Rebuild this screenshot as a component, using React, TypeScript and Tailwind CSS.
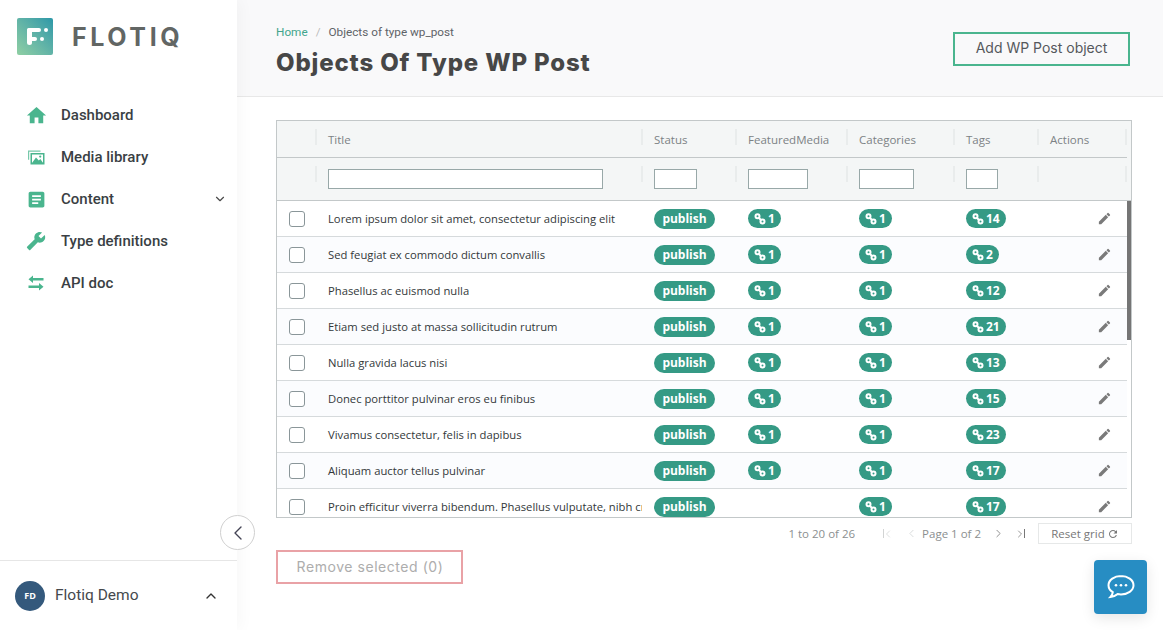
import { MdArticle, MdBuild, MdEdit, MdHome, MdRefresh } from 'react-icons/md';
import { ChevronDown, ChevronLeft, ChevronRight, ChevronUp } from 'lucide-react';

const rows = [
  { title: 'Lorem ipsum dolor sit amet, consectetur adipiscing elit', media: true, tags: 14 },
  { title: 'Sed feugiat ex commodo dictum convallis', media: true, tags: 2 },
  { title: 'Phasellus ac euismod nulla', media: true, tags: 12 },
  { title: 'Etiam sed justo at massa sollicitudin rutrum', media: true, tags: 21 },
  { title: 'Nulla gravida lacus nisi', media: true, tags: 13 },
  { title: 'Donec porttitor pulvinar eros eu finibus', media: true, tags: 15 },
  { title: 'Vivamus consectetur, felis in dapibus', media: true, tags: 23 },
  { title: 'Aliquam auctor tellus pulvinar', media: true, tags: 17 },
  { title: 'Proin efficitur viverra bibendum. Phasellus vulputate, nibh cras', media: false, tags: 17 },
];

const columns = [
  { name: 'Title', input: 'w-[275px]' },
  { name: 'Status', input: 'w-[43px]' },
  { name: 'FeaturedMedia', input: 'w-[60px]' },
  { name: 'Categories', input: 'w-[55px]' },
  { name: 'Tags', input: 'w-[32px]' },
  { name: 'Actions', input: '' },
];

const gridCols = 'grid grid-cols-[39px_326px_94px_111px_107px_84px_89px]';

function LinkPill({ count }: { count: number }) {
  return (
    <span className="inline-flex h-[19px] items-center gap-[2px] rounded-full bg-[#359a85] px-[6px] font-['Open_Sans',sans-serif] text-[12px] font-bold text-white">
      <svg width="12" height="12" viewBox="0 0 12 12" fill="none" stroke="white" strokeWidth="2">
        <circle cx="3.5" cy="3.300" r="2" />
        <circle cx="8.500" cy="8.500" r="2" />
        <path d="M4.800 4.800 7.200 7.200" />
      </svg>
      {count}
    </span>
  );
}

function MediaIcon() {
  return (
    <svg width="18" height="16" viewBox="0 0 18 16" className="text-[#4ab58e]">
      <path d="M1 1.500h12.500v1.200H2.200v8H1z" fill="currentColor" opacity="0.75" />
      <path d="M3.500 4H17.500v11.500H3.500zM5 5.400v8.700h11V5.400z" fill="currentColor" />
      <path d="M4.600 14.600 9 8.600l2.800 3 1.500-1.500 3.200 4.500z" fill="currentColor" />
      <circle cx="13.200" cy="7.600" r="1.100" fill="currentColor" />
    </svg>
  );
}

function SwapIcon() {
  return (
    <svg width="16" height="16" viewBox="0 0 16 16" fill="currentColor" className="text-[#4ab58e]">
      <path d="M5 .5v2.400h10.500v2.600H5v2.400L.5 4.200z" />
      <path d="M11 8v2.400H.5V13H11v2.400l4.500-3.700z" />
    </svg>
  );
}

function SideItem({ icon, label, chevron }: { icon: React.ReactNode; label: string; chevron?: boolean }) {
  return (
    <div className="flex h-[42px] items-center pl-[27px] pr-[10px]">
      <span className="flex w-[18px] items-center justify-center">{icon}</span>
      <span className="ml-[16px] flex-1 font-['Roboto',sans-serif] text-[15px] font-medium text-[#3a3f44]">{label}</span>
      {chevron && <ChevronDown size={14} className="text-[#4a4a4a]" />}
    </div>
  );
}

function Sidebar() {
  return (
    <aside className="relative z-10 flex h-full w-[237px] shrink-0 flex-col bg-white shadow-[4px_0_14px_rgba(0,0,0,0.03)]">
      <div className="flex items-center pl-[17px] pt-[18px]">
        <div className="relative h-[37px] w-[36px] rounded-[2px] bg-gradient-to-tr from-[#8fcfa3] to-[#2b98a8]">
          <span className="absolute left-[10px] top-[10px] h-[17px] w-[5px] rounded-full bg-white" />
          <span className="absolute left-[10px] top-[10px] h-[4px] w-[14px] rounded-full bg-white" />
          <span className="absolute left-[10px] top-[19px] h-[4px] w-[10px] rounded-full bg-white" />
          <span className="absolute left-[27px] top-[10px] h-[4px] w-[4px] rounded-full bg-white" />
          <span className="absolute left-[23px] top-[19px] h-[4px] w-[4px] rounded-full bg-white" />
        </div>
        <span className="ml-[19px] pt-[2px] font-['Inter',sans-serif] text-[25px] leading-none font-bold tracking-[3.6px] text-[#626664]">FLOTIQ</span>
      </div>
      <nav className="mt-[39px]">
        <SideItem icon={<MdHome size={23} className="shrink-0 text-[#4ab58e]" />} label="Dashboard" />
        <SideItem icon={<MediaIcon />} label="Media library" />
        <SideItem icon={<MdArticle size={21} className="shrink-0 text-[#4ab58e]" />} label="Content" chevron />
        <SideItem icon={<MdBuild size={20} className="shrink-0 -scale-x-100 text-[#4ab58e]" />} label="Type definitions" />
        <SideItem icon={<SwapIcon />} label="API doc" />
      </nav>
      <div className="mt-auto flex h-[70px] items-center border-t border-[#e6e6e6] pl-[15px] pr-[18px]">
        <span className="flex h-[30px] w-[30px] items-center justify-center rounded-full bg-[#34597c] font-['Open_Sans',sans-serif] text-[9px] font-bold text-white">FD</span>
        <span className="ml-[10px] flex-1 font-['Roboto',sans-serif] text-[15.5px] text-[#45494d]">Flotiq Demo</span>
        <ChevronUp size={16} className="text-[#333]" />
      </div>
      <button className="absolute right-[-18px] top-[515px] flex h-[35px] w-[35px] items-center justify-center rounded-full border border-[#d0d0d0] bg-white">
        <ChevronLeft size={24} strokeWidth={1.4} className="text-[#445]" />
      </button>
    </aside>
  );
}

function Table() {
  return (
    <div className="h-[398px] overflow-hidden border border-[#c3c8c9] font-['Open_Sans',sans-serif]">
      <div className="bg-[#f4f6f6]">
        <div className={`${gridCols} h-[37px] w-[850px] border-b border-[#c3c8c9] text-[11.5px] text-[#7c8285]`}>
          <div />
          {columns.map((col) => (
            <div key={col.name} className="relative flex items-center pl-[12px] pt-[1px]">
              <span className="absolute -left-px top-[8px] h-[16px] w-[2px] bg-[#e9ecec]" />
              {col.name}
              {col.name === 'Actions' && <span className="absolute right-0 top-[8px] h-[16px] w-[2px] bg-[#e9ecec]" />}
            </div>
          ))}
        </div>
        <div className="border-b border-[#c3c8c9]">
          <div className={`${gridCols} h-[42px] w-[850px]`}>
            <div />
            {columns.map((col) => (
              <div key={col.name} className="relative flex items-center pl-[12px]">
                <span className="absolute -left-px top-[8px] h-[16px] w-[2px] bg-[#e9ecec]" />
                {col.input && <span className={`${col.input} h-[20px] border border-[#98a8a8] bg-white`} />}
                {col.name === 'Actions' && <span className="absolute right-0 top-[8px] h-[16px] w-[2px] bg-[#e9ecec]" />}
              </div>
            ))}
          </div>
        </div>
      </div>
      <div className="relative">
        <div className="absolute left-[850px] top-0 h-[139px] w-[4px] bg-[#757575]" />
        {rows.map((row, i) => (
          <div key={row.title} className={`${gridCols} h-[36px] w-[850px] border-b border-[#d6dadc] ${i % 2 === 1 ? 'bg-[#fbfcfe]' : 'bg-white'}`}>
            <div className="flex items-center pl-[12px]">
              <span className="h-[16px] w-[16px] rounded-[3px] border border-[#8a9699] bg-white" />
            </div>
            <div className="flex items-center overflow-hidden pl-[12px] pt-[1px]">
              <span className="whitespace-nowrap text-[11.25px] text-[#33383a]">{row.title}</span>
            </div>
            <div className="flex items-center pl-[12px]">
              <span className="flex h-[20px] w-[61px] items-center justify-center rounded-full bg-[#359a85] text-[12px] font-bold text-white">publish</span>
            </div>
            <div className="flex items-center pl-[12px]">{row.media && <LinkPill count={1} />}</div>
            <div className="flex items-center pl-[12px]">
              <LinkPill count={1} />
            </div>
            <div className="flex items-center pl-[12px]">
              <LinkPill count={row.tags} />
            </div>
            <div className="flex items-center justify-end pr-[15px]">
              <MdEdit size={15} className="text-[#7a7a7a]" />
            </div>
          </div>
        ))}
      </div>
    </div>
  );
}

function Pager() {
  return (
    <div className="mt-[5px] flex h-[21px] items-center justify-end font-['Open_Sans',sans-serif] text-[11.5px] text-[#8b8f90]">
      <span>1 to 20 of 26</span>
      <span className="ml-[28px] flex items-center text-[#d2d4d4]">
        <span className="h-[9px] w-px bg-[#d2d4d4]" />
        <ChevronLeft size={12} strokeWidth={1.5} className="-ml-[2px]" />
      </span>
      <ChevronLeft size={13} strokeWidth={1.5} className="ml-[11px] text-[#d2d4d4]" />
      <span className="ml-[4px]">Page 1 of 2</span>
      <ChevronRight size={13} strokeWidth={1.5} className="ml-[11px] text-[#777]" />
      <span className="ml-[9px] flex items-center text-[#777]">
        <ChevronRight size={12} strokeWidth={1.5} className="-mr-[2px]" />
        <span className="h-[9px] w-px bg-[#777]" />
      </span>
      <span className="ml-[13px] flex h-[21px] w-[94px] items-center justify-center gap-[2px] border border-[#e6e8e8] text-[#777]">
        Reset grid
        <MdRefresh size={12} />
      </span>
    </div>
  );
}

export default function App() {
  return (
    <div className="relative flex h-[630px] w-[1163px] overflow-hidden bg-white">
      <Sidebar />
      <main className="flex min-w-0 flex-1 flex-col">
        <header className="flex h-[97px] shrink-0 items-start justify-between border-b border-[#e8e8e8] bg-[#f9f9fa] pl-[39px] pr-[33px]">
          <div className="pt-[24px]">
            <div className="flex items-center font-['Roboto',sans-serif] text-[11.75px] leading-[16px]">
              <span className="text-[#42a58c]">Home</span>
              <span className="mx-[8px] text-[#bbb]">/</span>
              <span className="text-[#5f6368]">Objects of type wp_post</span>
            </div>
            <h1 className="mt-[8px] font-['Inter',sans-serif] text-[24px] leading-[30px] font-extrabold tracking-[0.85px] text-[#474747]">Objects Of Type WP Post</h1>
          </div>
          <button className="mt-[32px] flex h-[34px] w-[177px] items-center justify-center border-2 border-[#4ab58e] pb-[3px] font-['Inter',sans-serif] text-[14px] text-[#55585c]">Add WP Post object</button>
        </header>
        <div className="pl-[39px] pr-[31px] pt-[23px]">
          <Table />
          <Pager />
          <button className="mt-[6px] flex h-[34px] w-[187px] items-center justify-center border-2 border-[#e9a2a6] pb-[1px] pl-[1px] font-['Inter',sans-serif] text-[14px] tracking-[0.55px] text-[#adadad]">Remove selected (0)</button>
        </div>
      </main>
      <button className="absolute left-[1094px] top-[560px] flex h-[54px] w-[53px] items-center justify-center rounded-[4px] bg-[#278dc3] shadow-[0_4px_14px_rgba(0,0,0,0.1)]">
        <svg width="28" height="26" viewBox="0 0 28 26" fill="none">
          <path d="M14 2C7.400 2 1.500 5.800 1.500 11.200c0 2.900 1.800 5.400 4.300 7-.2 1.900-1 3.500-2.300 4.800 2.800-.2 5.300-1.200 7.200-2.900 1 .2 2.100.3 3.300.3 6.600 0 12.500-3.800 12.500-9.200S20.600 2 14 2z" stroke="white" strokeWidth="2" />
          <circle cx="9" cy="11.200" r="1.300" fill="white" />
          <circle cx="14" cy="11.200" r="1.300" fill="white" />
          <circle cx="19" cy="11.200" r="1.300" fill="white" />
        </svg>
      </button>
    </div>
  );
}
